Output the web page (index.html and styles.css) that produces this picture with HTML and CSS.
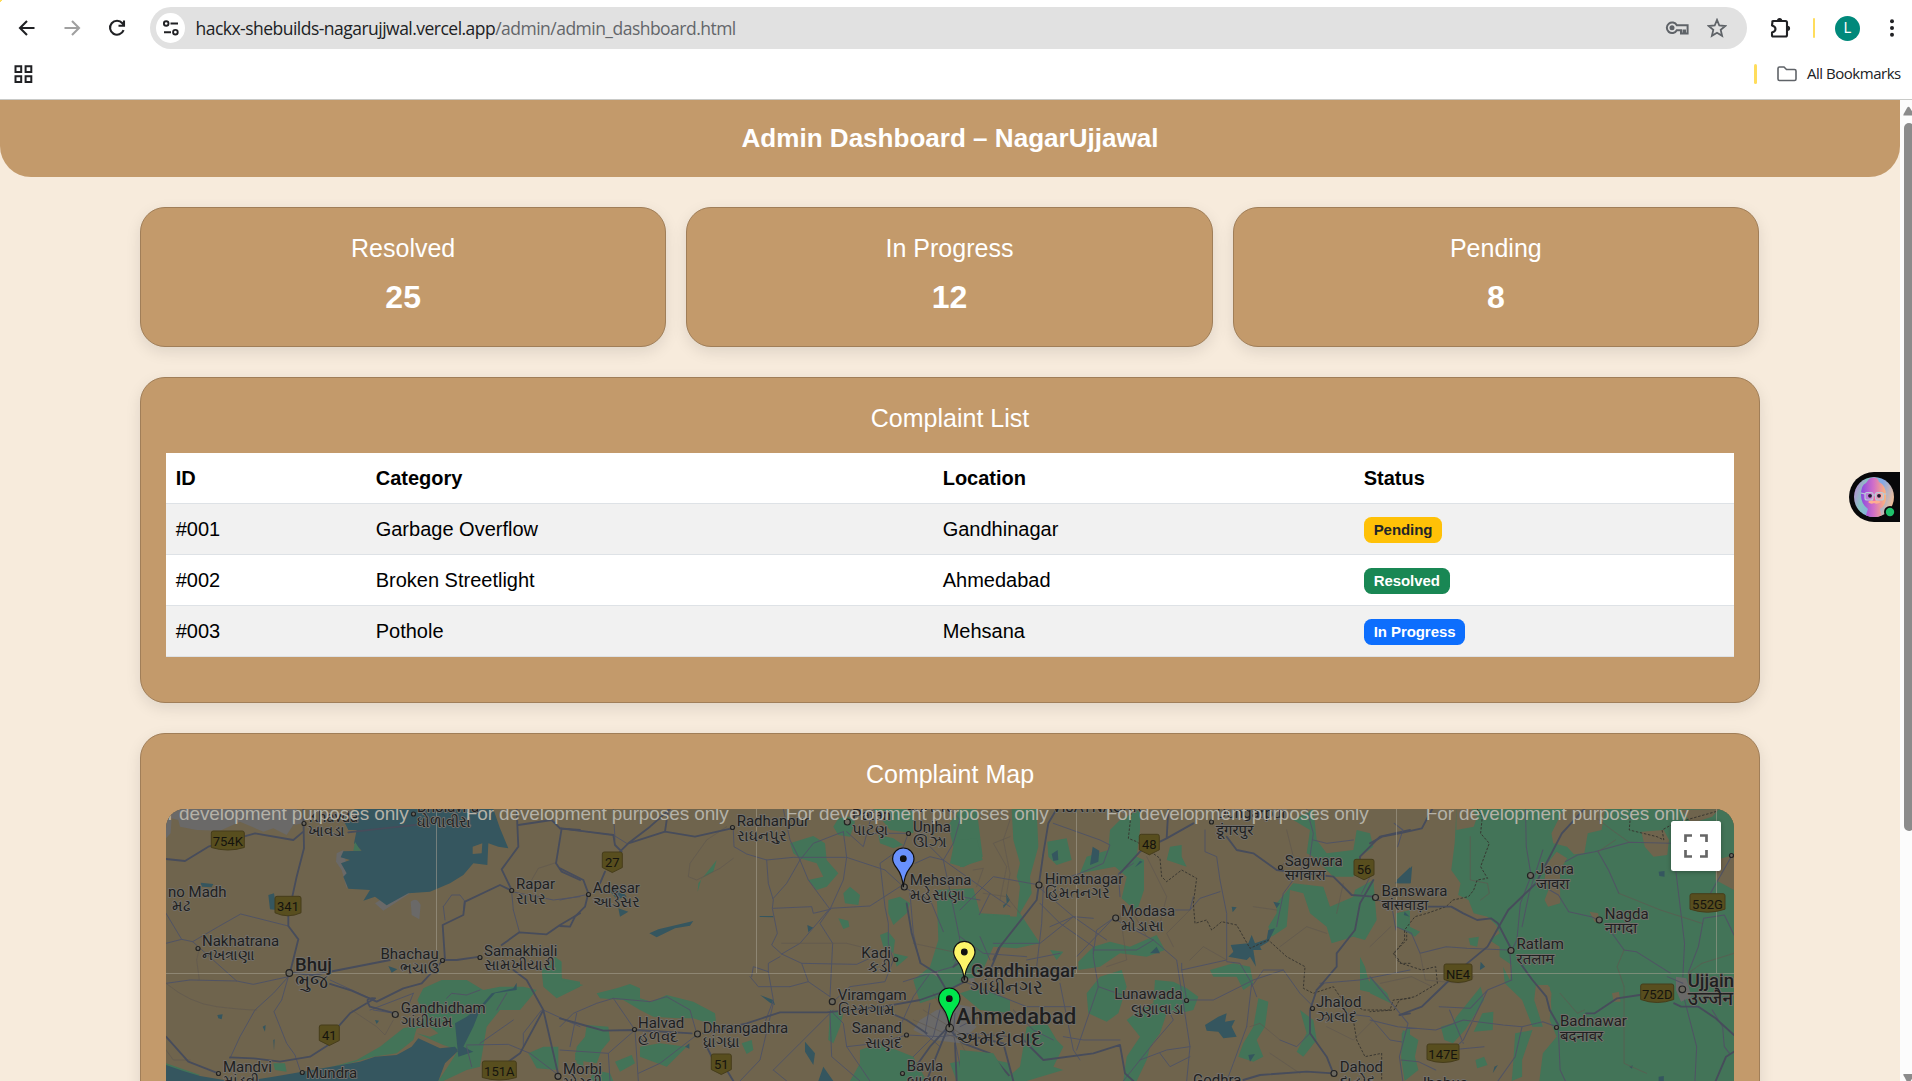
FILE: index.html
```html
<!DOCTYPE html>
<html lang="en">
<head>
<meta charset="utf-8">
<title>Admin Dashboard – NagarUjjawal</title>
<link rel="stylesheet" href="styles.css">
</head>
<body>
<div class="browser">
  <header class="chrome">
    <div class="toolbar">
      <svg class="nav-icon" viewBox="0 0 24 24"><path d="M19.500 12H5.500M12 5L5 12l7 7" /></svg>
      <svg class="nav-icon nav-icon-off" viewBox="0 0 24 24"><path d="M4.500 12h14M12 5l7 7-7 7" /></svg>
      <svg class="nav-icon" viewBox="0 0 24 24"><path d="M18.600 14.200A7 7 0 1 1 17.400 7.200L19 9M19 4.600V9.800H13.500" /></svg>
      <div class="address">
        <span class="site-info"><svg viewBox="0 0 18 18"><g fill="none" stroke="#202124" stroke-width="1.900"><circle cx="4.200" cy="4.500" r="2.300"/><path d="M8.500 4.500H16M2 13.200H9"/><circle cx="13.400" cy="13.200" r="2.300"/></g></svg></span>
        <span class="url">hackx-shebuilds-nagarujjwal.vercel.app<span class="url-path">/admin/admin_dashboard.html</span></span>
        <svg class="key" viewBox="0 0 24 14"><g fill="none" stroke="#5f6368" stroke-width="2"><path d="M11.800 4.300A5.300 5.300 0 1 0 11.800 9.300H16V12.500H18.500V9.500H20V12.500H22.600V4.300Z"/></g><circle cx="7" cy="6.800" r="2.500" fill="#5f6368"/></svg>
        <svg class="star" viewBox="0 0 20 20"><path d="M10 1.900l2.300 5.600 6 .5-4.600 3.900 1.400 5.900L10 14.700l-5.100 3.100 1.400-5.900L1.700 8l6-.5z" fill="none" stroke="#5f6368" stroke-width="1.800"/></svg>
      </div>
      <svg class="puzzle" viewBox="0 0 22 22"><path d="M2.500 4.500Q2 4 3 4H15.500Q17 4 17 5.500V18Q17 19.500 15.500 19.500H3Q2 19.500 2 18.500V15.500Q5.500 14.500 5.500 12T2 8.500Z" fill="none" stroke="#202124" stroke-width="2.100" stroke-linejoin="round"/><path d="M7 3.500a2.600 2.600 0 0 1 5.200 0zM17.500 8.700a2.600 2.600 0 0 1 0 5.200z" fill="#202124"/></svg>
      <span class="divider"></span>
      <span class="profile">L</span>
      <svg class="dots" viewBox="0 0 6 20"><circle cx="3" cy="3.200" r="2"/><circle cx="3" cy="10" r="2"/><circle cx="3" cy="16.800" r="2"/></svg>
    </div>
    <div class="bookmarks">
      <svg class="apps" viewBox="0 0 19 18"><g fill="none" stroke="#202124" stroke-width="2"><path d="M1.500 1.200H7.200V6.900H1.500ZM11.600 1.200H17.300V6.900H11.600ZM1.500 11.200H7.200V16.900H1.500ZM11.600 11.200H17.300V16.900H11.600Z"/></g></svg>
      <span class="divider divider-wide"></span>
      <svg class="folder" viewBox="0 0 20 16"><path d="M1 2.500Q1 1 2.500 1H7L9.500 3.500H17.500Q19 3.500 19 5V13Q19 14.500 17.500 14.500H2.500Q1 14.500 1 13Z" fill="none" stroke="#5f6368" stroke-width="1.600"/></svg>
      <span class="all">All Bookmarks</span>
    </div>
  </header>

  <div class="viewport">
    <main class="page">
      <h1 class="banner">Admin Dashboard – NagarUjjawal</h1>
      <div class="container">
        <section class="stats">
          <div class="card"><h2 class="card-title">Resolved</h2><p class="count">25</p></div>
          <div class="card"><h2 class="card-title">In Progress</h2><p class="count">12</p></div>
          <div class="card"><h2 class="card-title">Pending</h2><p class="count">8</p></div>
        </section>

        <section class="card list">
          <h2 class="card-title">Complaint List</h2>
          <table class="table">
            <colgroup><col class="c-id"><col class="c-cat"><col class="c-loc"><col></colgroup>
            <thead><tr><th>ID</th><th>Category</th><th>Location</th><th>Status</th></tr></thead>
            <tbody>
              <tr><td>#001</td><td>Garbage Overflow</td><td>Gandhinagar</td><td><span class="badge pending">Pending</span></td></tr>
              <tr><td>#002</td><td>Broken Streetlight</td><td>Ahmedabad</td><td><span class="badge resolved">Resolved</span></td></tr>
              <tr><td>#003</td><td>Pothole</td><td>Mehsana</td><td><span class="badge progress">In Progress</span></td></tr>
            </tbody>
          </table>
        </section>

        <section class="card">
          <h2 class="card-title">Complaint Map</h2>
          <div class="map">
            <svg class="map-canvas" viewBox="166 809 1568 272">
              <defs>
                <path id="pin" d="M0 28.500C-.8 19-2.500 14.500-6.500 9.500C-9 6.300-10.700 3.500-10.700 0A10.700 10.700 0 0 1 10.700 0C10.700 3.500 9 6.300 6.500 9.500C2.500 14.500.8 19 0 28.500Z"/>
              </defs>
              <rect x="166" y="809" width="1568" height="272" fill="#6f644d"/>

              <!-- western section: Kutch -->
              <g transform="translate(130 780) scale(.33333)">
                <path class="salt" d="M108 87H500L520 130 490 135 470 165 430 145 400 155 330 125 270 152 200 150 150 140 145 120 125 115 122 160 108 175ZM620 220L640 210 660 300 650 325 635 270 618 245ZM735 370L790 335 840 340 760 392ZM842 365Q860 350 872 375L868 418 845 405Z"/>
                <path class="water" d="M675 87H1090L1110 145 1135 205 1105 200 1075 190 1072 255 1030 250 1000 285 960 310 900 335 835 340 770 376 735 350 700 362 720 330 655 326 640 290 650 280 633 250 660 240 632 232 640 214 695 212 672 190 680 150 655 150 640 120ZM415 345L432 340 440 390 420 388ZM212 308L250 312 245 322 215 320ZM775 558L802 568 785 578ZM262 705L278 703 275 718 265 715ZM398 740L407 735 405 755ZM430 780L434 778 432 812ZM735 720L747 722 740 732Z"/>
                <path class="land" d="M1028 200L1057 190 1055 220 1028 222Z"/>
                <path class="green" d="M675 185L692 212 670 212ZM862 660L880 625 935 600 1010 600 1060 630 1110 620 1180 620 1220 630 1170 690 1110 690 1070 740 1050 860 1010 870 940 903H925L960 850 985 810 940 795 860 760 900 770 925 760 900 740 860 745 850 780 800 820 730 830 660 850 590 865 680 840 750 800 820 745 870 735 880 700ZM1235 570L1275 530 1295 545 1295 595 1350 605 1350 620 1280 655 1240 620ZM1195 820L1240 800 1285 800 1285 870 1220 865ZM1335 820L1360 800V860L1340 850ZM108 850L210 885 200 890 108 868ZM430 850L465 850 470 875 435 870Z"/>
                <path class="water" d="M108 855L160 873 210 888 300 903H925L945 850 985 812 975 800 930 805 865 775 845 800 800 825 735 830 690 845 560 868 430 890 350 903H108ZM975 730L1010 710 1050 680 1085 640 1150 625 1160 608 1160 630 1095 640 1050 690 1030 740 1000 800 1030 815 985 830Z"/>
                <g class="minor">
                  <path d="M108 490L155 478 188 485 265 440 332 402 475 438M108 400L155 478M188 485L320 603 M108 610L180 600 320 603 370 613 475 590M475 590L430 640 375 690 330 770 300 835M475 590L455 660 432 695 470 790 495 825 510 870M720 655L600 600M730 690L795 700M720 690L850 640M850 640L830 690M1010 795L1135 793 1200 820 1285 885M1150 720L1050 790M940 380L965 345 990 345 1003 362 1000 395M940 380L945 420M1145 335L1150 390 1168 455M1145 335L1270 360 1350 350M950 655L965 640 1010 645 1050 630M1130 640L1100 690M1010 800L1025 860M1235 690L1180 760 1180 800M1240 690L1350 740M1320 800L1340 700"/>
                </g>
                <g class="track"><path d="M208 505L200 540 208 600M108 610Q180 670 260 680T380 690M1205 300L1225 265 1278 248M665 690L740 740 765 765 790 720M108 810L130 840 180 840"/></g>
                <g class="major">
                  <path d="M108 237L165 243 235 200 375 160 490 180 520 155M520 87L522 205 500 290 475 405 475 438 505 478 480 578M480 578L550 585 780 540M935 540L980 540 1050 530M600 612L665 632 740 665 820 625 875 610 935 545M735 655L660 700 625 740 595 795 540 830 450 845 370 835 300 832M108 770L175 845 265 880M945 540L938 435 1000 405 1005 365 1110 315 1145 332M1115 495L1168 457 1250 463 1290 435 1350 400M1160 87L1165 200 1115 268 1145 330M1165 135L1265 120 1290 145 1350 150M1295 145L1278 250 1295 275 1350 300M1150 570L1190 600 1240 690 1270 820 1285 885M1240 690L1170 820 1135 845M655 157L760 145 900 130M735 655Q700 650 720 680L795 700"/>
                </g>
              </g>

              <!-- central section: Mehsana, Gandhinagar, Ahmedabad -->
              <g transform="translate(560 780) scale(.33333)">
                <path class="green" d="M0 535L5 600 70 615 0 640ZM110 640L170 625 210 612 240 625 240 655 275 665 320 645 400 665 465 700 470 740 445 730 400 715 350 715 280 710 240 690 190 660 120 655ZM80 735L145 740 150 780 125 810 110 850 45 840 50 800 75 770ZM165 845L215 825 225 850 180 875ZM100 870L150 880 160 903H90ZM240 800L300 790 380 800 350 830 320 860 240 830ZM415 310L470 240 460 275 425 295 413 335ZM690 190L760 168 795 190 800 240 835 280 800 320 770 330 745 300 790 290 770 250 720 235 700 220ZM850 340L870 320 900 345 895 375 855 370ZM985 360L1020 350 1050 370 1040 400 1000 435 985 400ZM835 415L865 422 868 440 850 447ZM960 465L985 455 1005 480 1000 520 970 500ZM820 140L835 115 865 110 885 125 870 170 835 165ZM1165 135L1200 87H1250L1268 230 1210 262 1170 250 1180 200ZM955 165L1000 175 1030 195 1000 205 960 190ZM940 87H1060V160L990 150ZM1000 520L1045 530 1010 560ZM1130 330L1240 325 1260 400 1350 405V460L1280 470 1240 545 1215 600 1140 650 1080 670 1060 600 1110 560 1135 480ZM810 690L850 700 840 740 820 790 805 780ZM545 790L575 780 580 810 560 822ZM900 810L960 790 1060 830 1100 903H870L900 850ZM1170 850L1260 830 1350 850V903H1190ZM1200 640L1260 620 1350 660V700L1260 690Z"/>
                <path class="water" d="M268 460L295 448 400 423 390 437 345 445 290 472ZM598 408L640 408 640 412 600 411ZM742 435L760 443 745 457ZM735 785L765 820 760 855 735 815ZM790 860L820 903H775ZM600 645L640 660 645 675 630 668ZM140 320L180 325 200 350 170 358ZM175 385L205 395 180 410ZM375 800L388 790 388 806Z"/>
                <path class="salt" d="M1080 720L1130 690 1180 680 1250 740 1200 790 1120 780 1060 750ZM1110 575L1135 572 1130 590ZM1175 670L1230 680 1240 710 1190 710ZM1200 590L1240 580 1245 610Z"/>
                <g class="minor">
                  <path d="M85 343L0 360M0 145L160 165 200 190M160 87L165 180M520 150L522 200 560 222 620 240 700 232 860 232 975 270 1030 320M620 240L625 310 640 360 637 385 652 460 635 495 665 522 720 490 810 385 930 378 1020 320M640 355L680 310 720 240 690 180 670 87M720 240L745 300 810 388M810 388L780 430 818 490 810 650M665 522L725 550 890 553 940 530M575 590L580 560 625 575 625 550 660 530M570 590L595 620 690 620 745 605 725 550M745 605L810 650M625 575L640 660 610 740M640 385L755 380 760 400 810 388M720 240L760 190 850 155M850 155L860 232 850 300 810 388M860 155L910 200 940 87M900 160H1045M1045 160L1030 200 960 250 975 380 985 430 985 490 1000 540 975 605 870 620 825 660M1065 250L1110 230 1150 240 1290 340 1350 380M1150 240L1180 190 1200 120 1170 87M1150 240L1165 310 1200 480 1180 540M1150 240L1080 170M1030 320L1115 370 1150 455M1050 340L1060 460 1080 550M1290 340L1220 480 1180 560 1110 580 1030 605M1110 580L1060 650 1020 740M810 690L850 730 860 800 950 790 1040 765M1040 765L1140 770 1230 760 1350 770M1140 690L1120 770 1060 830M1110 670L1095 760 1140 800M1185 700L1180 760 1210 903M1200 740L1280 700 1350 700M0 740L40 700 110 670 160 655 225 750M160 655L270 665 320 650 390 690 410 760M225 750L235 903M225 750L145 820 150 903M235 880L300 850 410 765M145 820L0 810M640 670L600 840 540 903M640 870L680 903M640 870L720 790 820 690M810 700L815 830 900 903M860 800L930 903"/>
                </g>
                <g class="track"><path d="M520 235L480 265 410 300 385 290 390 250 440 180 500 140M665 490H860L940 510M1350 170L1300 190 1340 260 1320 360M1240 270L1270 265 1250 320M1060 490L1200 520M1090 690L1200 760M1120 640L1230 840M1060 720L1250 800"/></g>
                <g class="major">
                  <path d="M180 215L205 190 270 140 330 87M205 190L315 155 405 170 515 145M315 155L325 87M0 145L80 155 160 165 165 195 185 215M135 275L120 310M0 265L70 300 85 340 75 380 45 410 30 440 0 438M0 715L70 735 130 752 225 750 395 760M430 760L560 730 660 697 800 697 970 680 1080 660 1165 630 1215 605M440 800L460 840M500 870L520 903M1180 560L1350 440M1165 740L1110 800 1060 870M1165 745L1210 790 1290 820 1350 890M1185 790L1190 903M1165 740L1120 850 1100 903M1040 370L1055 460 1082 550 1130 580 1165 640M970 690L1040 720 1100 760M1300 540L1350 430"/>
                </g>
              </g>

              <!-- Himatnagar to Dahod -->
              <g transform="translate(960 780) scale(.33333)">
                <path class="green" d="M0 180L50 175 68 240 0 262ZM155 87H230L235 200 210 290 215 340 180 400 240 490 170 505 100 500 60 590 0 600V405H80L170 410 180 320 170 290 180 250 160 180ZM262 185L320 175 335 240 290 255 265 230ZM480 120L540 87V150L530 230 552 240 552 330 530 395 485 355 500 290 465 260 360 280 380 230 445 210 450 150ZM630 200L665 195 665 230 680 260 620 240ZM355 545L400 500 450 485 510 500 590 465 615 510 560 530 480 520 420 560 355 570ZM420 590L485 570 500 620 475 700 440 725 385 700 380 640ZM585 600L640 605 680 625 715 650 700 690 660 700 620 700 600 760 570 800 560 840 530 903H490L500 830 540 770 500 720 540 690 580 670ZM750 570L820 550 870 560 880 610 850 630 830 590 760 590ZM895 655L925 665 915 740 890 780 910 830 880 845 835 830 850 790 880 740ZM950 370L1000 310 1090 320 1110 380 1180 350 1185 330 1240 300 1250 420 1215 480 1180 470 1115 490 1100 440 1050 400 1030 340 990 330 980 440 935 470 925 440 950 400ZM1000 120L1060 87 1070 180 1100 220 1180 210 1190 150 1230 160 1240 200 1200 230 1180 290 1120 290 1060 230 1040 220 1050 150ZM270 510L310 515 290 540ZM200 740L260 730 290 780 310 800 280 860 310 870 200 903H130L180 860ZM1200 530L1215 560 1225 600 1265 645 1200 630ZM1020 690L1060 720 1070 780 1030 830 1010 815 1040 760ZM1325 760L1350 740V850L1325 800ZM0 810L100 820 150 903H0ZM1310 400L1350 390V440L1310 440Z"/>
                <path class="water" d="M398 200L418 212 415 245 390 255ZM275 222L293 210 295 240 280 243ZM548 245L525 262 540 242ZM812 495L865 490 875 465 885 490 920 478 925 450 945 445 925 485 900 500 905 510 880 510 888 560 870 530 860 540 805 530 820 515ZM735 735L775 710 800 700 795 725 825 720 815 740 830 770 790 775 775 755 740 752ZM570 520L590 500 600 520 565 520ZM815 380L830 382 818 397ZM1310 300L1350 262V310H1315ZM940 365L960 370 950 385ZM865 825L885 822 870 845ZM138 340L150 360 130 385 130 375 140 370Z"/>
                <path class="minor" d="M238 315L100 290 0 390M280 130L420 180 450 195 430 250 360 280 270 310M250 320L245 430 230 560M240 325L340 410 440 480M240 370L300 430 400 500 400 530 415 620 350 810M340 410L240 490 100 490M350 530L460 415M400 415L340 410 270 440M400 510L530 510 580 480M460 415L410 450 400 520M460 415L580 480 650 540 690 800 680 903M480 350L475 280 520 250M645 390H690L720 355 780 335M690 390L700 350M735 150L735 215 770 230 780 300 800 400 800 540M800 540L665 570 665 550M800 545L840 550 875 610 860 740M665 570L680 660 760 660 880 600 970 570 1020 640 1060 680M970 570L910 570 875 620M0 470L70 520 200 530M0 600L100 640 200 680 340 680M415 620L500 650 620 640M540 840L620 810 690 800M540 840L490 903M600 820L630 860 690 830M875 610L890 650M860 740L820 850 800 903M950 440L970 340 1000 300 1050 230 1060 160 1040 87M1060 180L1100 190 1180 180M1205 340L1240 270M1080 610L1200 600 1350 570M1080 720L1150 700 1230 710 1290 780 1350 790M1050 760L1010 800 960 780M620 680L640 720 580 790 540 840M310 770L370 780 480 780M160 690L220 750 280 780M300 610L340 810 360 840M200 540L300 520M0 350L60 360M60 470L90 540M1250 360L1300 370 1350 370M1310 400V360"/>
                <g class="track"><path d="M70 340L140 350 180 400M120 87L150 120 130 180 150 280 140 340M690 390L620 460 640 500M800 540L730 500 690 540M960 500L1040 440 1100 460M960 780L900 730 870 740M520 400L560 470M560 230L620 350 600 430M960 260L1000 230 980 150M1150 310L1130 400M480 400L500 540 440 560M270 560L300 600M880 380L950 390M1100 740L1180 780 1240 720M930 820L1020 880"/></g>
                <g class="border"><path d="M515 87L505 175 530 185 600 235 605 290 620 305 665 270 710 295 700 370 705 430 740 420 755 450 785 425 830 435 870 505 925 480 980 530 1035 560 1030 625 1060 640 1120 620 1140 650 1210 690 1290 690 1300 660 1350 655M1350 550L1320 550 1300 520 1340 480 1340 440M1180 720L1190 780 1215 830 1265 820 1265 903"/></g>
                <g class="major"><path d="M290 87L265 130 250 220 230 360 175 430 120 500 95 560M480 280L540 215 560 200M600 185L620 175 700 130M620 175L625 87M800 170L830 210 880 220 950 270 1120 290 1175 345 1240 350M1240 300L1200 370 1185 450 1130 520 1130 560 1070 630 1050 690 1050 760 1100 830 1120 880 1040 875 900 885 850 900M0 760L130 790 160 903M190 780L250 840 400 820 480 795 495 880 520 903M1350 150L1260 170 1200 230 1200 250M1070 630L1090 610M1350 700L1320 705"/></g>
              </g>

              <!-- eastern section: Ratlam, Ujjain -->
              <g transform="translate(1370 780) scale(.34567 .33333)">
                <path class="green" d="M250 87H1053V903H490L500 820 540 770 520 720 525 640 515 615 480 615 475 660 500 740 470 740 440 660 390 610 385 560 405 600 410 555 375 530 375 500 345 480 375 460 365 435 340 410 300 400 285 360 255 345 262 310 235 270 245 190ZM75 400L110 395 115 440 145 455 130 470 78 440ZM285 475L315 470 310 500 290 495ZM205 740L240 730 250 710 320 620 330 660 275 750 240 790 215 780ZM325 700L357 695 355 750 300 755ZM305 840L330 830 340 855 310 865ZM420 760L470 750 440 840 440 890 410 903 415 840ZM95 750L140 780 130 830 140 870 100 903 90 830ZM0 590L50 640 60 670 0 640ZM540 600L580 640 600 700 560 690Z"/>
                <path class="land" d="M250 87H295L310 110 300 140 250 150ZM525 160L560 87H680L670 150 630 160 620 220 590 223 570 200 530 190ZM540 215L570 235 550 270 550 370 515 380 505 360 520 320 505 300 510 255ZM785 155L850 150 865 180 860 225 820 230 795 200ZM1000 240L1053 225V330L1000 300ZM635 395L660 400 665 430 650 425ZM490 615L520 620 525 690 500 680 480 650ZM700 640L720 635 725 665 705 665ZM900 90L1010 87 990 110 930 130Z"/>
                <path class="water" d="M72 310L122 258 118 310ZM835 275L852 273 852 290 837 288ZM750 860L760 856 758 866ZM835 890L850 888V903H835ZM320 545L333 560 318 570ZM100 395L115 410 98 405ZM370 855L355 880 360 860Z"/>
                <path class="salt" d="M885 590L915 595 930 650 900 665 885 630Z"/>
                <path class="minor" d="M450 87L452 200 465 280M465 290L435 370 425 480 410 510M520 330L545 345 575 395 640 410 660 420M565 245L600 225 650 215 750 187 870 190M660 215L690 270 720 340M885 275L910 490 905 590M1045 230L985 340M1053 465L1025 405 965 415 950 500 920 580M700 460L735 510 770 515 870 580M910 660L945 800 940 903M860 590L905 610M75 440L120 460 145 520 220 500 280 505 400 510M60 360L75 450M405 520L410 600 340 630 270 780 250 800M0 720L80 740 190 750 270 720 385 735 440 740 500 725 540 740M110 730L85 830 95 903M0 590L110 730M200 680L290 685 340 630M230 690L270 790M440 740L420 830 370 903M545 750L550 870 565 903M500 210L460 340 440 440M990 690L1020 740 1025 800 1040 820M80 200L95 150 70 130M90 840L140 845 190 870M230 810L330 800"/>
                <g class="track"><path d="M290 170V300L340 310 345 340 320 360M660 215L710 180M750 187L700 150 650 110M720 340L840 390 960 430M735 510L715 560 735 620 735 850 800 880M1053 520L960 550 920 580M0 500L60 440M145 520L160 600 260 610 300 590M30 610L120 590 180 620M550 640L600 700 620 690"/></g>
                <g class="border"><path d="M310 87L325 110 320 160 345 190 320 260 340 295 310 300 300 330 285 350 240 360 220 380 165 400 130 410 100 450 100 480 70 520 90 550 150 570 190 560 195 610 130 650 85 660 70 690 0 695M755 87L750 150 830 170 850 180 845 150 880 130 1000 95"/></g>
                <g class="major"><path d="M0 190L35 170 85 160 150 145 180 87M620 87L555 160 510 250 480 310 400 390 340 500 270 560 200 630 150 680 85 705M170 380H235L270 400 310 420 350 415 370 430 410 510M435 550L470 600 510 650 520 690 545 735M625 700L650 700 715 655 780 645M880 670L900 680 950 680 1000 715 1053 765M1053 815L1030 830 1000 903"/></g>
              </g>

              <path class="tiles" d="M166 973.500H1734M436.500 809V973M756.500 809V973M1076.500 809V973M1396.500 809V973M1716.500 809V973"/>

              <g class="towns">
                <circle cx="304" cy="823.500" r="2"/><circle cx="413.500" cy="814" r="2"/><circle cx="198" cy="948.500" r="2"/><circle cx="289.300" cy="973" r="3.300"/><circle cx="442.500" cy="960.500" r="2"/><circle cx="480" cy="957.500" r="2"/><circle cx="395.300" cy="1014.500" r="3"/><circle cx="218.500" cy="1073.500" r="2"/><circle cx="302.300" cy="1072.500" r="2"/><circle cx="511.700" cy="890.500" r="2"/><circle cx="558" cy="1076.300" r="3"/><circle cx="732.500" cy="827.500" r="2"/><circle cx="588.500" cy="894.500" r="2"/><circle cx="847.300" cy="822" r="3"/><circle cx="908.500" cy="833.500" r="2"/><circle cx="904.300" cy="887" r="3"/><circle cx="895.700" cy="959.500" r="2"/><circle cx="832.300" cy="1001.700" r="3"/><circle cx="634.500" cy="1029.500" r="2"/><circle cx="697.500" cy="1034" r="3"/><circle cx="906.500" cy="1035" r="2"/><circle cx="902.500" cy="1073.500" r="2"/><circle cx="964.700" cy="979.500" r="3"/><circle cx="949.700" cy="1028" r="3.800"/><circle cx="1039" cy="885" r="3"/><circle cx="1115.700" cy="918" r="3"/><circle cx="1211.500" cy="822" r="2"/><circle cx="1280.500" cy="867.500" r="2"/><circle cx="1186.500" cy="1000.500" r="2"/><circle cx="1312.500" cy="1008.500" r="2"/><circle cx="1334" cy="1073.500" r="3"/><circle cx="1375.500" cy="897.500" r="3"/><circle cx="1530.500" cy="875.500" r="3"/><circle cx="1599.300" cy="920" r="3"/><circle cx="1511" cy="950.500" r="3"/><circle cx="1682.300" cy="989.300" r="3.300"/><circle cx="1556.500" cy="1027.500" r="2"/><circle cx="1731.500" cy="855.500" r="2"/>
              </g>

              <g class="shields">
                <path d="M213.300 831h29q2 0 2 2v14.500q-16.500 5-33 0V833q0-2 2-2zM277 896.300h22q2 0 2 2v14.500q-13 6-26 0V898.300q0-2 2-2zM321.300 1025h16q2 0 2 2v13.500l-10 5-10-5V1027q0-2 2-2zM484.300 1061h30q2 0 2 2v14.500q-17 5-34 0V1063q0-2 2-2zM604.300 852h16q2 0 2 2v13.500l-10 5-10-5V854q0-2 2-2zM713.300 1054h16q2 0 2 2v13.500l-10 5-10-5V1056q0-2 2-2zM1141.300 834.300h16q2 0 2 2v13.500l-10 5-10-5V836.300q0-2 2-2zM1356 859.300h16q2 0 2 2v13.500l-10 5-10-5V861.300q0-2 2-2zM1692 893.700h31q2 0 2 2v13.500q-17.500 6-35 0V895.700q0-2 2-2zM1446 964h24q2 0 2 2v13.500q-14 6-28 0V966q0-2 2-2zM1642.700 984h29q2 0 2 2v13.500q-16.500 6-33 0V986q0-2 2-2zM1429 1044h28q2 0 2 2v13.500q-16 6-32 0V1046q0-2 2-2z"/>
                <text x="227.800" y="845.500">754K</text><text x="288" y="911">341</text><text x="329.300" y="1039.500">41</text><text x="499.300" y="1076">151A</text><text x="612.300" y="866.500">27</text><text x="721.300" y="1068.500">51</text><text x="1149.300" y="848.800">48</text><text x="1364" y="873.800">56</text><text x="1707.500" y="908.700">552G</text><text x="1458" y="978.500">NE4</text><text x="1657.200" y="998.500">752D</text><text x="1443" y="1058.500">147E</text>
              </g>

              <g class="labels">
                <text x="308.700" y="822">Khavda</text><text x="308" y="836">ખાવડા</text>
                <text x="417" y="812">Dholavira</text><text x="417" y="827">ધોળાવીરા</text>
                <text x="168" y="896.700">no Madh</text><text x="172" y="911">મઢ</text>
                <text x="202" y="946">Nakhatrana</text><text x="202" y="960">નખત્રાણા</text>
                <text x="438.700" y="959" class="end">Bhachau</text><text x="438.700" y="973" class="end">ભચાઉ</text>
                <text x="484" y="955.500">Samakhiali</text><text x="484" y="970">સામખીયારી</text>
                <text x="400.700" y="1012.700">Gandhidham</text><text x="400.700" y="1027">ગાંધીધામ</text>
                <text x="223" y="1072">Mandvi</text><text x="223" y="1086">માંડવી</text>
                <text x="306" y="1077.700">Mundra</text>
                <text x="516" y="889">Rapar</text><text x="516" y="903.500">રાપર</text>
                <text x="736.700" y="825.700">Radhanpur</text><text x="736.700" y="840.500">રાધનપુર</text>
                <text x="592.700" y="892.500">Adesar</text><text x="592.700" y="907">આડેસર</text>
                <text x="852" y="819.500">Patan</text><text x="852" y="834.500">પાટણ</text>
                <text x="906" y="812">વડનગર</text>
                <text x="913" y="832">Unjha</text><text x="913" y="846.500">ઊંઝા</text>
                <text x="909.700" y="885">Mehsana</text><text x="909.700" y="900">મહેસાણા</text>
                <text x="891" y="957.700" class="end">Kadi</text><text x="891" y="972" class="end">કડી</text>
                <text x="837.700" y="1000">Viramgam</text><text x="837.700" y="1014.500">વિરમગામ</text>
                <text x="638" y="1027.500">Halvad</text><text x="638" y="1042">હળવદ</text>
                <text x="702.700" y="1032.700">Dhrangadhra</text><text x="702.700" y="1047">ધ્રાંગધ્રા</text>
                <text x="563" y="1074">Morbi</text><text x="563" y="1088">મોરબી</text>
                <text x="902" y="1033" class="end">Sanand</text><text x="902" y="1047.700" class="end">સાણંદ</text>
                <text x="906.700" y="1071">Bavla</text><text x="906.700" y="1085.500">બાવળા</text>
                <text x="1044.700" y="883.500">Himatnagar</text><text x="1044.700" y="898">હિંમતનગર</text>
                <text x="1121" y="916">Modasa</text><text x="1121" y="930.700">મોડાસા</text>
                <text x="1052" y="812">VIJAYNAGAR</text>
                <text x="1216.700" y="818">Dungarpur</text><text x="1216" y="834.700">डूंगरपुर</text>
                <text x="1284.700" y="865.700">Sagwara</text><text x="1284.700" y="880">सगवारा</text>
                <text x="1182.700" y="999" class="end">Lunawada</text><text x="1184" y="1013.500" class="end">લુણાવાડા</text>
                <text x="1316" y="1007">Jhalod</text><text x="1316" y="1021.700">ઝાલોદ</text>
                <text x="1339.700" y="1072">Dahod</text><text x="1339.700" y="1086.500">દાહોદ</text>
                <text x="1193" y="1085">Godhra</text>
                <text x="1381.400" y="896">Banswara</text><text x="1381.400" y="910">बांसवाड़ा</text>
                <text x="1536" y="874">Jaora</text><text x="1536" y="888.700">जावरा</text>
                <text x="1604.700" y="918.500">Nagda</text><text x="1604.700" y="932.700">नागदा</text>
                <text x="1516.600" y="949">Ratlam</text><text x="1516.600" y="963.700">रतलाम</text>
                <text x="1560" y="1026">Badnawar</text><text x="1560" y="1040.500">बदनावर</text>
                <text x="1418.400" y="1088">Jhabua</text>
                <g class="city"><text x="295" y="970.500">Bhuj</text><text x="295" y="988">ભુજ</text><text x="971" y="977">Gandhinagar</text><text x="970" y="994">ગાંધીનગર</text><text x="1687.700" y="987">Ujjain</text><text x="1687.700" y="1004.500">उज्जैन</text></g>
                <g class="metro"><text x="956" y="1024">Ahmedabad</text><text x="956" y="1046">અમદાવાદ</text></g>
              </g>

              <g class="watermark"><text x="145.700" y="820.300" textLength="263">For development purposes only</text><text x="465.700" y="820.300" textLength="263">For development purposes only</text><text x="785.700" y="820.300" textLength="263">For development purposes only</text><text x="1105.700" y="820.300" textLength="263">For development purposes only</text><text x="1425.700" y="820.300" textLength="263">For development purposes only</text></g>

              <g stroke="#111" stroke-width="1.200">
                <use href="#pin" x="903.300" y="858.700" fill="#6991fd"/><circle cx="903.300" cy="858.700" r="2.800" fill="#111"/>
                <use href="#pin" x="964.300" y="952" fill="#fdf569"/><circle cx="964.300" cy="952" r="2.800" fill="#111"/>
                <use href="#pin" x="949.300" y="998.700" fill="#00e64d"/><circle cx="949.300" cy="998.700" r="2.800" fill="#111"/>
              </g>
            </svg>
            <button class="fullscreen" aria-label="Fullscreen"><svg viewBox="0 0 24 24"><path d="M1.500 8V1.500H8M16 1.500H22.500V8M22.500 16V22.500H16M8 22.500H1.500V16" fill="none" stroke="#666" stroke-width="2.700"/></svg></button>
          </div>
        </section>
      </div>

      <div class="assistant">
        <svg viewBox="0 0 51 50">
          <defs>
            <linearGradient id="sky" x1="0" y1="0.300" x2="1" y2="0.600"><stop offset="0" stop-color="#b58fd0"/><stop offset=".25" stop-color="#86c3c4"/><stop offset=".6" stop-color="#83a8e8"/><stop offset="1" stop-color="#f3bd94"/></linearGradient>
            <linearGradient id="face"><stop offset="0" stop-color="#8b4ae0"/><stop offset=".5" stop-color="#d16fc8"/><stop offset="1" stop-color="#ffb679"/></linearGradient>
            <clipPath id="disc"><circle cx="25" cy="25" r="20"/></clipPath>
          </defs>
          <circle cx="25" cy="25" r="20" fill="url(#sky)"/>
          <g clip-path="url(#disc)"><path d="M20 7Q28 3 30 10Q37 13 37 24Q37 34 31 37L33 46H16L19 37Q12 32 12 23Q12 13 17 11Z" fill="url(#face)"/><path d="M19 30Q22 27 25 29Q28 27 32 30Q28 33 25 31Q22 33 19 30Z" fill="#ffae91"/><circle cx="25.500" cy="26.500" r="2" fill="#f2609b"/></g>
          <g fill="#ffffff33" stroke="#b8ced8" stroke-width="1.200"><rect x="16" y="20.500" width="8" height="7.500" rx="2"/><rect x="26.500" y="20.500" width="8" height="7.500" rx="2"/><path d="M12 21l4 1M24 23h2.500M34.500 22h3"/></g>
          <circle cx="21" cy="23.800" r="1.900" fill="#211c2e"/><circle cx="30" cy="23.800" r="1.900" fill="#211c2e"/>
          <circle cx="41" cy="40" r="6" fill="#08080a"/><circle cx="41" cy="40" r="4.200" fill="#1fc16b"/>
        </svg>
      </div>
    </main>
    <div class="scrollbar">
      <svg class="arrow" viewBox="0 0 12 10"><path d="M3.300 9.500Q3.300 8 4.500 6.500L7 2Q8.500-.5 10 2L13 7V9.500Z" fill="#8b8b8b"/></svg>
      <span class="thumb"></span>
      <svg class="arrow arrow-down" viewBox="0 0 12 10"><path d="M3.300 0H13V3L10 8H7L4.500 3Q3.300 2 3.300 0Z" fill="#8b8b8b"/></svg>
    </div>
  </div>
</div>
</body>
</html>
```
FILE: styles.css
```css
* { box-sizing: border-box; }
body { margin: 0; overflow: hidden; font-family: "Liberation Sans", Arial, sans-serif; }
h1, h2, p { margin: 0; }
svg { display: block; }

.browser { display: flex; flex-direction: column; width: 1912px; height: 1081px; }

.chrome {
  height: 100px;
  flex: none;
  border-bottom: 1px solid #c9cac8;
  background: radial-gradient(circle at 8px 8px, #fff 8px, #ffdd5c 8.500px) 0 0 / 8px 8px no-repeat, #fff;
  background-position: -1px -1px;
  font-family: "Open Sans", "Noto Sans", sans-serif;
}
.toolbar { display: flex; align-items: center; height: 56px; padding: 0 17px 0 14.500px; }
.nav-icon { width: 24px; height: 24px; margin-right: 21px; fill: none; stroke: #202124; stroke-width: 2.100; }
.nav-icon-off { stroke: #a0a0a0; }
.address {
  display: flex;
  align-items: center;
  width: 1597px;
  height: 42px;
  padding: 0 19.500px 0 6.500px;
  border-radius: 21px;
  background: #e1e1e1;
}
.site-info { display: grid; place-items: center; width: 29px; height: 30px; border-radius: 50%; background: #fff; }
.site-info svg { width: 18px; height: 18px; }
.url { flex: 1; margin-left: 10.500px; font-size: 17.500px; letter-spacing: -.52px; color: #202124; white-space: nowrap; }
.url-path { color: #63666a; }
.key { width: 24px; height: 14px; margin-right: 18px; }
.star { width: 20px; height: 20px; }
.puzzle { width: 22px; height: 22px; margin-left: 23px; }
.divider { width: 2.500px; height: 20px; margin-left: 21px; border-radius: 2px; background: #ffdd5c; }
.profile {
  display: grid;
  place-items: center;
  width: 25px;
  height: 25px;
  margin-left: 20px;
  border-radius: 50%;
  background: #00897b;
  color: #fff;
  font: 14px Roboto, sans-serif;
}
.dots { width: 6px; height: 20px; margin-left: 29px; fill: #202124; }
.bookmarks { display: flex; align-items: center; height: 36px; padding: 0 11px 0 14px; }
.apps { width: 19px; height: 18px; }
.divider-wide { width: 3px; margin-left: auto; }
.folder { width: 20px; height: 16px; margin: 0 10px 0 20px; }
.all { width: 94px; padding-bottom: 2px; font-size: 15px; letter-spacing: -.48px; color: #202124; white-space: nowrap; }

.viewport { display: flex; flex: 1; min-height: 0; }
.page { position: relative; width: 1900px; overflow: hidden; background: #f7ebdc; }
.banner {
  height: 77px;
  padding-top: 17.500px;
  border-radius: 0 0 31px 31px;
  background: #c39a6b;
  color: #fff;
  font-size: 26.050px;
  line-height: 41px;
  text-align: center;
}
.container { display: flex; flex-direction: column; gap: 30px; width: 1620px; margin: 30px auto 0; }
.stats { display: grid; grid-template-columns: repeat(3, 1fr); gap: 20px; height: 140px; margin-right: 1px; }
.card {
  padding: 25px;
  border: 1px solid #a07e58;
  border-radius: 25px;
  background: #c39a6b;
  box-shadow: 0 5px 15px rgba(0, 0, 0, .1);
  color: #fff;
}
.card-title { margin-bottom: 20px; font-size: 25px; font-weight: 400; line-height: 30px; text-align: center; }
.stats .card-title { margin-bottom: 10px; }
.count { font-size: 32px; font-weight: 700; line-height: 48px; text-align: center; }
.list { height: 326px; }
.table { width: 100%; border-collapse: separate; border-spacing: 0; table-layout: fixed; background: #fff; color: #000; font-size: 20px; }
.table th, .table td { height: 51px; padding: 0 10px 0 9.700px; border-bottom: 1px solid #dee2e6; line-height: 30px; text-align: left; }
.table tbody tr:nth-child(odd) { background: #f1f1f1; }
.c-id { width: 200px; }
.c-cat { width: 567px; }
.c-loc { width: 421px; }
.badge {
  display: block;
  width: max-content;
  margin-top: 2px;
  padding: 5px 10px;
  border-radius: 7.500px;
  color: #fff;
  font-size: 15px;
  font-weight: 700;
  letter-spacing: -.07px;
  line-height: 16px;
}
.pending { background: #ffc107; color: #212529; }
.resolved { background: #198754; }
.progress { background: #0d6efd; }

.map { position: relative; height: 500px; overflow: hidden; border-radius: 19px; background: #6f644d; }
.map-canvas { width: 1568px; height: 272px; }
.water { fill: #35565f; }
.green { fill: #437458; }
.salt { fill: #6a6968; }
.land { fill: #6f644d; }
.minor, .major, .track, .border { fill: none; stroke-linejoin: round; stroke-linecap: round; }
.minor { stroke: #505364; stroke-width: 3; }
.major { stroke: #474c5b; stroke-width: 5.500; }
.track { stroke: #5f5850; stroke-width: 2; }
.border { stroke: #37352f; stroke-width: 2.800; stroke-dasharray: 5 7; }
.tiles { fill: none; stroke: #a8a394; stroke-opacity: .55; }
.towns { fill: #6b685f; stroke: #222; stroke-width: 1.200; }
.shields path { fill: #584e1e; stroke: #463d1b; }
.shields text { fill: #15140e; font: 13px Roboto, sans-serif; text-anchor: middle; }
.labels { fill: #1f1f20; stroke: #72706c; stroke-width: 1.800px; stroke-linejoin: round; paint-order: stroke; font: 15px Roboto, "Noto Sans", sans-serif; }
.end { text-anchor: end; }
.city { font-size: 18.500px; font-weight: 500; }
.metro { font-size: 22.300px; font-weight: 500; }
.watermark { fill: #b5b2a8; font: 19px "Liberation Sans", Arial, sans-serif; }
.fullscreen {
  position: absolute;
  top: 12px;
  right: 13px;
  display: grid;
  place-items: center;
  width: 50px;
  height: 50px;
  padding: 0;
  border: 0;
  border-radius: 2.500px;
  background: #fff;
  box-shadow: 0 1px 4px rgba(0, 0, 0, .3);
}
.fullscreen svg { width: 24px; height: 24px; }

.assistant { position: absolute; top: 372px; right: 0; width: 51px; height: 50px; border-radius: 25px 0 0 25px; background: #08080a; }

.scrollbar { display: flex; flex-direction: column; width: 12px; overflow: hidden; background: #fcfcfc; }
.arrow { flex: none; width: 12px; height: 10px; margin-top: 6px; }
.thumb { flex: none; width: 10px; height: 708px; margin: 7px 0 0 4px; border-radius: 5px; background: #8b8b8b; }
.arrow-down { margin-top: 243px; }
```
